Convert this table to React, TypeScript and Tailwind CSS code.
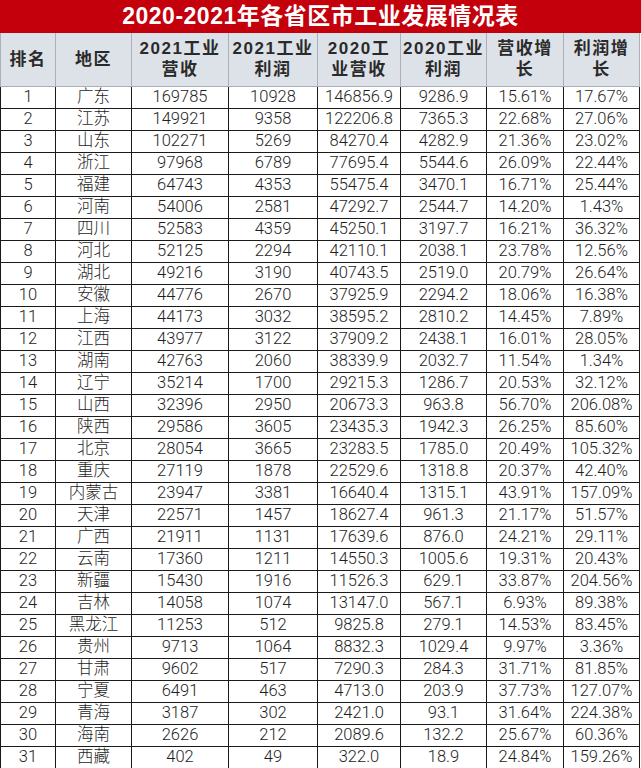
import React from "react";

type Row = [number, string, string, string, string, string, string, string];

const rows: Row[] = [
  [1, "广东", "169785", "10928", "146856.9", "9286.9", "15.61%", "17.67%"],
  [2, "江苏", "149921", "9358", "122206.8", "7365.3", "22.68%", "27.06%"],
  [3, "山东", "102271", "5269", "84270.4", "4282.9", "21.36%", "23.02%"],
  [4, "浙江", "97968", "6789", "77695.4", "5544.6", "26.09%", "22.44%"],
  [5, "福建", "64743", "4353", "55475.4", "3470.1", "16.71%", "25.44%"],
  [6, "河南", "54006", "2581", "47292.7", "2544.7", "14.20%", "1.43%"],
  [7, "四川", "52583", "4359", "45250.1", "3197.7", "16.21%", "36.32%"],
  [8, "河北", "52125", "2294", "42110.1", "2038.1", "23.78%", "12.56%"],
  [9, "湖北", "49216", "3190", "40743.5", "2519.0", "20.79%", "26.64%"],
  [10, "安徽", "44776", "2670", "37925.9", "2294.2", "18.06%", "16.38%"],
  [11, "上海", "44173", "3032", "38595.2", "2810.2", "14.45%", "7.89%"],
  [12, "江西", "43977", "3122", "37909.2", "2438.1", "16.01%", "28.05%"],
  [13, "湖南", "42763", "2060", "38339.9", "2032.7", "11.54%", "1.34%"],
  [14, "辽宁", "35214", "1700", "29215.3", "1286.7", "20.53%", "32.12%"],
  [15, "山西", "32396", "2950", "20673.3", "963.8", "56.70%", "206.08%"],
  [16, "陕西", "29586", "3605", "23435.3", "1942.3", "26.25%", "85.60%"],
  [17, "北京", "28054", "3665", "23283.5", "1785.0", "20.49%", "105.32%"],
  [18, "重庆", "27119", "1878", "22529.6", "1318.8", "20.37%", "42.40%"],
  [19, "内蒙古", "23947", "3381", "16640.4", "1315.1", "43.91%", "157.09%"],
  [20, "天津", "22571", "1457", "18627.4", "961.3", "21.17%", "51.57%"],
  [21, "广西", "21911", "1131", "17639.6", "876.0", "24.21%", "29.11%"],
  [22, "云南", "17360", "1211", "14550.3", "1005.6", "19.31%", "20.43%"],
  [23, "新疆", "15430", "1916", "11526.3", "629.1", "33.87%", "204.56%"],
  [24, "吉林", "14058", "1074", "13147.0", "567.1", "6.93%", "89.38%"],
  [25, "黑龙江", "11253", "512", "9825.8", "279.1", "14.53%", "83.45%"],
  [26, "贵州", "9713", "1064", "8832.3", "1029.4", "9.97%", "3.36%"],
  [27, "甘肃", "9602", "517", "7290.3", "284.3", "31.71%", "81.85%"],
  [28, "宁夏", "6491", "463", "4713.0", "203.9", "37.73%", "127.07%"],
  [29, "青海", "3187", "302", "2421.0", "93.1", "31.64%", "224.38%"],
  [30, "海南", "2626", "212", "2089.6", "132.2", "25.67%", "60.36%"],
  [31, "西藏", "402", "49", "322.0", "18.9", "24.84%", "159.26%"],
];

const headers: React.ReactNode[] = [
  "排名",
  "地区",
  <>2021工业<br />营收</>,
  <>2021工业<br />利润</>,
  <>2020工<br />业营收</>,
  <>2020工业<br />利润</>,
  <>营收增<br />长</>,
  <>利润增<br />长</>,
];

const widths = [55, 76, 97, 89, 83, 86, 77, 76];

export default function App() {
  return (
    <div className="w-[641px] h-[768px] overflow-hidden bg-white font-['Roboto','Noto_Sans_CJK_SC',sans-serif]">
      {/* Title */}
      <div className="h-[33px] bg-[#c3000c] flex items-center justify-center">
        <h1 className="text-white font-bold text-[23px] leading-none tracking-[0.5px] font-['Liberation_Sans','Noto_Sans_CJK_SC',sans-serif]">
          2020-2021年各省区市工业发展情况表
        </h1>
      </div>

      <table className="table-fixed border-collapse w-[639px]">
        <colgroup>
          {widths.map((w, i) => (
            <col key={i} style={{ width: w }} />
          ))}
        </colgroup>
        <thead>
          <tr className="h-[53px] bg-[#dde2e8]">
            {headers.map((h, i) => (
              <th
                key={i}
                className="border border-[#a9b0b8] border-t-0 p-0 text-center align-middle text-[17px] leading-[21px] font-bold tracking-[1.5px] text-[#2a2a2a] font-['Liberation_Sans','Noto_Sans_CJK_SC',sans-serif]"
              >
                {h}
              </th>
            ))}
          </tr>
        </thead>
        <tbody>
          {rows.map((r) => (
            <tr key={r[0]} className="h-[22px]">
              {r.map((c, i) => (
                <td
                  key={i}
                  className="border border-[#1a1a1a] p-0 text-center align-middle text-[16.5px] leading-[20px] font-light text-[#1e1e1e] whitespace-nowrap"
                >
                  {c}
                </td>
              ))}
            </tr>
          ))}
        </tbody>
      </table>
    </div>
  );
}
